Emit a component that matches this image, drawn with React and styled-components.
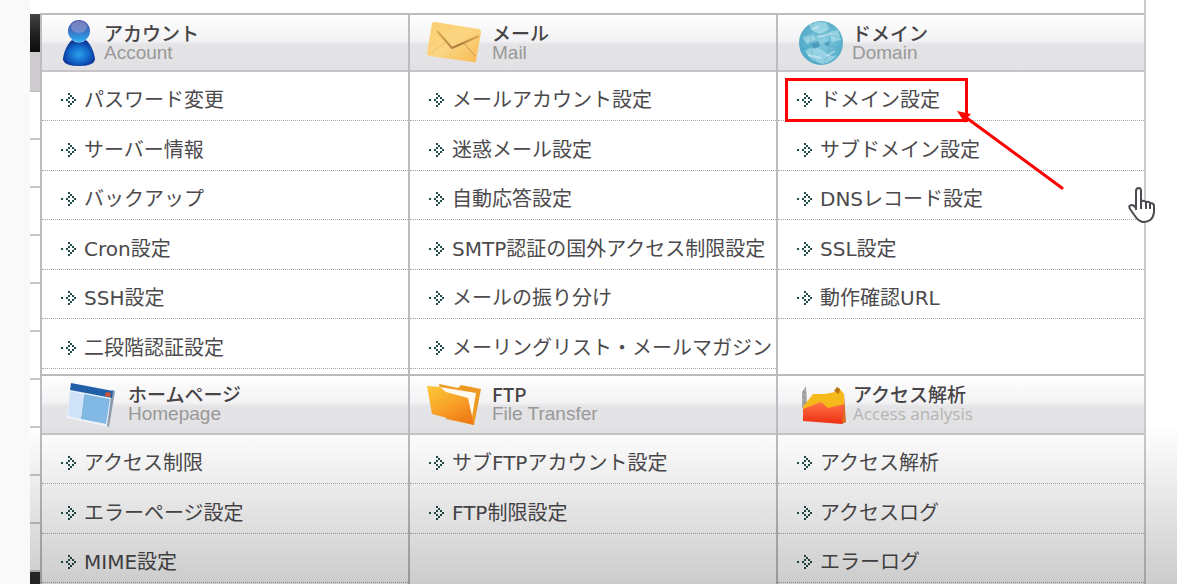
import React from "react";
import styled, { createGlobalStyle, css } from "styled-components";

const GlobalStyle = createGlobalStyle`
* {
  box-sizing: border-box;
}
body {
  margin: 0;
  background: #fff;
  font-family: "DejaVu Sans", "Noto Sans CJK JP", sans-serif;
}
`

const Page = styled.div`
  position: relative;
  display: flex;
  min-height: 100vh;
  overflow: hidden;
`

const Gutter = styled.div`
  flex: 0 0 30px;
  background: #f9f9f9;
`

const SideMenu = styled.div`
  flex: 0 0 10px;
  display: flex;
  flex-direction: column;
  padding-top: 14px;
`

const SideHead = styled.div`
  height: 38px;
  background: linear-gradient(#444, #222 50%, #0c0c0c);
`

const SideCurrent = styled.div`
  height: 40px;
  background: #cdcbcd;
  border-bottom: 1px solid #bbb;
`

const SideItem = styled.div`
  height: 48px;
  border-bottom: 2px solid #c8c6c8;
`

const SideFoot = styled.div`
  flex: 1;
  background: #2c2c2c;
`

const Main = styled.main`
  flex: 1;
  display: flex;
  flex-direction: column;
  padding-top: 13px;
  margin-right: 31px;
  border-right: 2px solid #cbc9cc;
`

const Band = styled.div`
  display: grid;
  grid-template-columns: repeat(3, 1fr);
  border-top: 2px solid #bcbabc;
  &:last-child {
    flex: 1;
  }
`

const Category = styled.section`
  border-left: 2px solid #bebcc0;
  min-width: 0;
  padding-bottom: ${props => props.$space}px;
`

const CategoryHead = styled.header`
  display: flex;
  align-items: center;
  height: ${props => (props.$tall ? 59 : 57)}px;
  padding-left: ${props => props.$left}px;
  gap: ${props => props.$gap}px;
  border-bottom: 2px solid #c6c4c7;
  background: linear-gradient(#fff, #f3f2f4 46%, #e4e3e5 54%, #e2e1e3);
`

const Heading = styled.div`
  align-self: flex-start;
  padding-top: 8px;
`

const Title = styled.h2`
  margin: 0;
  color: #464446;
  font-family: "Noto Sans CJK JP", sans-serif;
  font-size: 19px;
  font-weight: 500;
  line-height: 20px;
`

const SubTitle = styled.p`
  margin: 0;
  color: #999;
  font-family: "Liberation Sans", Arial, sans-serif;
  font-size: 19px;
  line-height: 20px;
  ${props => props.$light && css`
    color: #b4b4b4;
    font-family: "Open Sans", sans-serif;
    font-size: 17px;
  `}
`

const List = styled.ul`
  list-style: none;
  margin: 0;
  padding: 0;
`

const Row = styled.li`
  position: relative;
  height: 49px;
  border-bottom: 1px dotted #aaa8aa;
  &:nth-child(even) {
    height: 50px;
  }
`

const RowLink = styled.a`
  display: flex;
  align-items: center;
  gap: 7px;
  height: 100%;
  padding: 8px 0 0 19px;
  color: #4c4a4c;
  font-size: 20px;
  line-height: 24px;
  white-space: nowrap;
  text-decoration: none;
`

const Marker = styled.div`
  position: absolute;
  top: 6px;
  left: 7px;
  width: 183px;
  height: 44px;
  border: 3px solid #fe0000;
`

const MarkerArrow = styled.svg`
  position: absolute;
  top: 36px;
  left: 178px;
  z-index: 2;
`

const Pointer = styled.svg`
  position: absolute;
  top: 187px;
  right: 21px;
  z-index: 2;
`

const Shade = styled.div`
  position: absolute;
  inset: 424px 0 0 30px;
  background: linear-gradient(rgba(0, 0, 0, 0), rgba(0, 0, 0, 0.2));
  pointer-events: none;
`

const dots = [[0, 6], [5, 6], [7, 0], [7, 12], [9, 2], [9, 10], [11, 4], [11, 8], [13, 6], [7, 4], [7, 8]]

function Bullet() {
  return (
    <svg width="16" height="14" viewBox="0 0 16 14" aria-hidden="true">
      {dots.map(([x, y]) => (
        <rect key={x + "-" + y} x={x} y={y} width="2" height="2" fill="#1f4d4b" />
      ))}
    </svg>
  )
}

function UserIcon() {
  return (
    <svg width="34" height="48" viewBox="0 0 34 48" aria-hidden="true">
      <defs>
        <radialGradient id="userBody" cx="50%" cy="55%" r="55%">
          <stop offset="0" stopColor="#2fa0ea" />
          <stop offset="0.55" stopColor="#126acb" />
          <stop offset="1" stopColor="#0a2f91" />
        </radialGradient>
        <linearGradient id="userHead" x1="0" y1="0" x2="0" y2="1">
          <stop offset="0" stopColor="#4b58a8" />
          <stop offset="0.5" stopColor="#3b71c2" />
          <stop offset="1" stopColor="#27b0f4" />
        </linearGradient>
      </defs>
      <path d="M10 21 Q17 26 24 21 C29 25 33 35 33 41 Q31 47 17 47 Q3 47 1 41 C1 35 5 25 10 21Z" fill="url(#userBody)" />
      <circle cx="17" cy="12" r="11" fill="url(#userHead)" />
      <ellipse cx="17" cy="8" rx="8" ry="6" fill="#a5a6d4" opacity="0.5" />
    </svg>
  )
}

function MailIcon() {
  return (
    <svg width="56" height="44" viewBox="0 0 56 44" aria-hidden="true">
      <defs>
        <linearGradient id="mail" x1="0" y1="0" x2="1" y2="1">
          <stop offset="0" stopColor="#fbcf70" />
          <stop offset="0.5" stopColor="#fcd583" />
          <stop offset="1" stopColor="#f6b94f" />
        </linearGradient>
        <linearGradient id="flap" x1="0" y1="0" x2="1" y2="0">
          <stop offset="0" stopColor="#e0a952" />
          <stop offset="0.5" stopColor="#a9793a" />
          <stop offset="1" stopColor="#e0a952" />
        </linearGradient>
      </defs>
      <path d="M6 2 Q7 1 9 1 L53 8 Q55 9 55 11 L50 40 Q50 42 47 41 L3 35 Q1 34 1 32Z" fill="url(#mail)" />
      <path d="M4 33 L20 21" stroke="#f0bf68" strokeWidth="1" />
      <path d="M37 21 L49 35" stroke="#c39758" strokeWidth="1" />
      <path d="M11 10 L26 27 L53 15" stroke="url(#flap)" strokeWidth="2" strokeLinejoin="round" fill="none" />
    </svg>
  )
}

function GlobeIcon() {
  return (
    <svg width="45" height="46" viewBox="0 0 45 46" aria-hidden="true">
      <defs>
        <radialGradient id="globe" cx="55%" cy="45%" r="58%">
          <stop offset="0" stopColor="#8fd0e3" />
          <stop offset="0.6" stopColor="#62b5d0" />
          <stop offset="1" stopColor="#4fa9c6" />
        </radialGradient>
      </defs>
      <circle cx="22" cy="23" r="22" fill="url(#globe)" />
      <path d="M10 5 Q18 0 28 3 L31 9 L21 14 L14 11Z M30 12 L39 10 L42 20 L33 22Z M3 17 L14 14 L17 19 L8 24Z" fill="#c9eef3" opacity="0.5" />
      <path d="M6 31 Q16 24 26 32 T40 32 Q34 42 24 44 Q12 42 6 31Z" fill="#b6e4ee" opacity="0.6" />
      <path d="M12 24 L19 21 L21 26 L15 29Z M25 23 L31 21 L29 27Z" fill="#3183aa" opacity="0.6" />
      <path d="M2 19 Q20 10 43 18 M2 30 Q22 20 43 29 M15 2 Q6 24 18 44 M28 2 Q36 24 25 44" stroke="#3c94b4" strokeWidth="1" fill="none" opacity="0.3" />
      <path d="M12 9 L20 7 M18 17 L32 14 M9 35 L22 38 M27 36 L36 31" stroke="#fff" strokeWidth="2" opacity="0.4" />
    </svg>
  )
}

function WindowIcon() {
  return (
    <svg width="50" height="46" viewBox="0 0 50 46" aria-hidden="true">
      <path d="M5 1 L49 9 L43 45 L1 36Z" fill="#eef3fa" />
      <path d="M49 9 L46 8 L41 44 L43 45Z" fill="#8b99ab" />
      <path d="M5 1 L47 9 L46 16 L4 8Z" fill="#2160a9" />
      <path d="M4 9 L17 12 L15 37 L2 34Z" fill="#d0e2f8" />
      <path d="M18 12 L44 17 L40 42 L15 37Z" fill="#82b8e4" />
      <path d="M40 10 L45 11 L44 15 L39 14Z" fill="#d2502e" />
    </svg>
  )
}

function FolderIcon() {
  return (
    <svg width="56" height="44" viewBox="0 0 56 44" aria-hidden="true">
      <defs>
        <linearGradient id="folder" x1="0" y1="0" x2="0.6" y2="1">
          <stop offset="0" stopColor="#fcc935" />
          <stop offset="0.6" stopColor="#f8a028" />
          <stop offset="1" stopColor="#ee7d18" />
        </linearGradient>
      </defs>
      <path d="M13 1 L32 5 L35 2 L55 6 L48 42 L20 36Z" fill="#ed9a23" />
      <path d="M14 4 L50 10 L46 34 L20 30Z" fill="#fffaf0" />
      <path d="M1 3 L14 4 L20 9 L42 15 L48 42 L6 31Z" fill="url(#folder)" />
    </svg>
  )
}

function AnalysisIcon() {
  return (
    <svg width="46" height="42" viewBox="0 0 46 42" aria-hidden="true">
      <defs>
        <linearGradient id="area" x1="0" y1="0" x2="0" y2="1">
          <stop offset="0" stopColor="#ff7448" />
          <stop offset="1" stopColor="#ee2f12" />
        </linearGradient>
      </defs>
      <path d="M1 8 L5 2 L6 18 L1 25Z" fill="#aaa9a5" />
      <path d="M2 7 L5 10 M2 12 L5 15 M2 17 L5 20" stroke="#888" strokeWidth="1" />
      <path d="M2 23 L12 10 L24 10 L34 8 L38 4 L43 10 L43 28 L2 30Z" fill="#f5b91c" />
      <path d="M33 7 L36 3 L39 5 L38 10Z" fill="#b87616" />
      <path d="M2 25 L20 18 L27 24 L43 20 L43 38 L41 40 L2 37Z" fill="url(#area)" />
      <path d="M43 10 L45 38 L41 40 L43 20Z" fill="#d86c20" />
    </svg>
  )
}

const categories = [
  [
    { title: "アカウント", sub: "Account", icon: UserIcon, left: 20, gap: 8,
      items: ["パスワード変更", "サーバー情報", "バックアップ", "Cron設定", "SSH設定", "二段階認証設定"] },
    { title: "メール", sub: "Mail", icon: MailIcon, left: 16, gap: 10,
      items: ["メールアカウント設定", "迷惑メール設定", "自動応答設定", "SMTP認証の国外アクセス制限設定", "メールの振り分け", "メーリングリスト・メールマガジン"] },
    { title: "ドメイン", sub: "Domain", icon: GlobeIcon, left: 21, gap: 8,
      items: ["ドメイン設定", "サブドメイン設定", "DNSレコード設定", "SSL設定", "動作確認URL"] },
  ],
  [
    { title: "ホームページ", sub: "Homepage", icon: WindowIcon, left: 24, gap: 12,
      items: ["アクセス制限", "エラーページ設定", "MIME設定"] },
    { title: "FTP", sub: "File Transfer", icon: FolderIcon, left: 16, gap: 10,
      items: ["サブFTPアカウント設定", "FTP制限設定"] },
    { title: "アクセス解析", sub: "Access analysis", icon: AnalysisIcon, left: 23, gap: 6, light: true,
      items: ["アクセス解析", "アクセスログ", "エラーログ"] },
  ],
]

function App() {
  return (
    <>
      <GlobalStyle />
      <Page>
        <Gutter />
        <SideMenu>
          <SideHead />
          <SideCurrent />
          {[...Array(10)].map((_, i) => <SideItem key={i} />)}
          <SideFoot />
        </SideMenu>
        <Main>
          {categories.map((band, n) => (
            <Band key={n}>
              {band.map(({ title, sub, icon: Icon, left, gap, light, items }) => (
                <Category key={title} $space={n === 0 ? 5 : 0}>
                  <CategoryHead $left={left} $gap={gap} $tall={n === 1}>
                    <Icon />
                    <Heading>
                      <Title>{title}</Title>
                      <SubTitle $light={light}>{sub}</SubTitle>
                    </Heading>
                  </CategoryHead>
                  <List>
                    {items.map(item => (
                      <Row key={item}>
                        <RowLink href="#">
                          <Bullet />
                          {item}
                        </RowLink>
                        {item === "ドメイン設定" && (
                          <>
                            <Marker />
                            <MarkerArrow width="110" height="84" viewBox="0 0 110 84" fill="none" aria-hidden="true">
                              <path d="M8 8 L106 80" stroke="#fe0000" strokeWidth="3" strokeLinecap="round" />
                              <path d="M1 3 L15 6 L12 9 L9 15Z" fill="#fe0000" />
                            </MarkerArrow>
                          </>
                        )}
                      </Row>
                    ))}
                  </List>
                </Category>
              ))}
            </Band>
          ))}
        </Main>
        <Shade />
        <Pointer width="28" height="36" viewBox="0 0 28 36" fill="none" aria-hidden="true">
          <path
            d="M8 23 V4 Q8 1 11 1 Q13 1 13 4 V14 Q16 13 18 15 Q21 14 22 16 Q26 16 26 19 V25 Q25 35 15 35 Q10 34 7 29 L2 22 Q0 18 4 18 Q6 18 8 21"
            fill="#fff"
            stroke="#4a4a50"
            strokeWidth="2"
            strokeLinejoin="round"
          />
          <path d="M13 14 V22 M18 15 V22 M22 16 V22" stroke="#4a4a50" strokeWidth="2" />
        </Pointer>
      </Page>
    </>
  )
}

export default App
